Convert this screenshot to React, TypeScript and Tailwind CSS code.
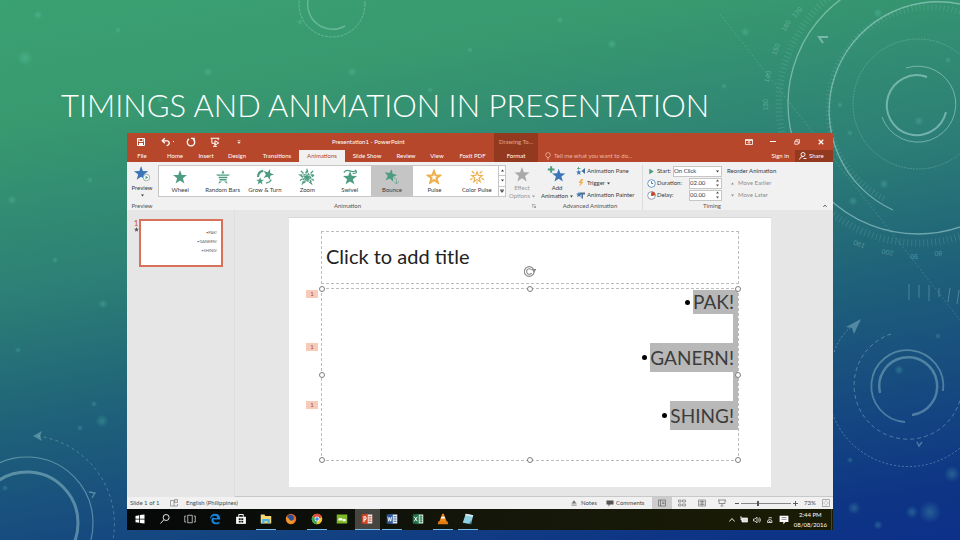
import type { ReactNode } from "react";
import clsx from "clsx";

const STAR = "M8 0 L10 5.6 L16 5.8 L11.3 9.5 L13 15.4 L8 12 L3 15.4 L4.7 9.5 L0 5.8 L6 5.6Z";

const TABS = [
  { name: "File", width: "w-[30px]" },
  { name: "Home", width: "w-9" },
  { name: "Insert", width: "w-[26px]" },
  { name: "Design", width: "w-9" },
  { name: "Transitions", width: "w-11" },
  { name: "Animations", width: "w-[46px]" },
  { name: "Slide Show", width: "w-11" },
  { name: "Review", width: "w-[34px]" },
  { name: "View", width: "w-7" },
  { name: "Foxit PDF", width: "w-[43px]" },
  { name: "Format", width: "w-11" },
];

const GREEN = "#4c9c80";
const ORANGE = "#eeb04e";

const EFFECTS: { name: string; icon: ReactNode }[] = [
  { name: "Wheel", icon: <path d={STAR} fill={GREEN} /> },
  {
    name: "Random Bars",
    icon: (
      <path
        d="M8 0 L9.6 4 H6.4Z M0 5 H16 L14.5 6.6 H1.5Z M3 7.6 H13 V9.4 H3Z M4 10.4 H12 V12 H4Z M3.4 13 H7 L3 15.6Z M12.6 13 H9 L13 15.6Z"
        fill={GREEN}
      />
    ),
  },
  {
    name: "Grow & Turn",
    icon: (
      <g fill={GREEN}>
        <path d={STAR} transform="translate(5 -1) rotate(18 8 8) scale(.78)" />
        <path d={STAR} transform="translate(-2 8) scale(.55)" />
        <path d="M0 8 Q0 2 6 1" fill="none" stroke={GREEN} strokeWidth="2.4" />
        <path d="M15 11 Q14 14 9 15" fill="none" stroke={GREEN} strokeWidth="1.6" />
      </g>
    ),
  },
  {
    name: "Zoom",
    icon: (
      <g>
        <path d={STAR} fill="none" stroke={GREEN} strokeWidth="1.6" strokeDasharray="3 1" />
        <path d={STAR} fill={GREEN} transform="translate(3.2 3.6) scale(.6)" />
        <path d="M1 1 L4 4 M15 1 L12 4 M0 12 L3 10 M16 12 L13 10" stroke={GREEN} strokeWidth="1.6" />
      </g>
    ),
  },
  {
    name: "Swivel",
    icon: (
      <g>
        <path d={STAR} fill={GREEN} transform="translate(0 1)" />
        <path d="M1 3 Q3 -1 8 1 T15 0 M14 0 Q18 4 11 4" fill="none" stroke={GREEN} strokeWidth="1.4" />
      </g>
    ),
  },
  {
    name: "Bounce",
    icon: (
      <g>
        <path d={STAR} fill={GREEN} transform="translate(-1 -1) rotate(12 8 8) scale(.9)" />
        <path d="M10 9 Q14 9 13 15 M11 14 L13 16 L16 13" fill="none" stroke={GREEN} strokeDasharray="2 1" />
      </g>
    ),
  },
  {
    name: "Pulse",
    icon: (
      <g>
        <path d={STAR} fill={ORANGE} stroke={ORANGE} strokeWidth="1.6" strokeLinejoin="round" />
        <path d={STAR} fill="#fff" transform="translate(4.4 4.6) scale(.45)" />
      </g>
    ),
  },
  {
    name: "Color Pulse",
    icon: (
      <g>
        <path d={STAR} fill="none" stroke={ORANGE} transform="translate(2 2) scale(.75)" strokeWidth="1.8" />
        <path d="M2 1 L5 4 M14 1 L11 4 M0 11 L3 9.5 M16 11 L13 9.5 M8 16 V13" stroke={ORANGE} strokeWidth="1.4" />
      </g>
    ),
  },
];

const BULLETS = [
  { text: "PAK!", box: "h-6" },
  { text: "GANERN!", box: "h-[29px]" },
  { text: "SHING!", box: "h-[29px]" },
];

const HANDLES = [
  "left-0 top-0",
  "left-1/2 top-0",
  "left-full top-0",
  "left-0 top-1/2",
  "left-full top-1/2",
  "left-0 top-full",
  "left-1/2 top-full",
  "left-full top-full",
];

const SPECKS = [
  [25, 58, 5], [38, 15, 3], [118, 30, 2], [208, 72, 3], [352, 72, 3], [300, 22, 2], [470, 50, 2], [612, 44, 3],
  [745, 32, 3], [724, 86, 2], [640, 118, 2], [878, 13, 3], [919, 121, 3], [850, 133, 2], [884, 184, 3], [853, 201, 3],
  [103, 304, 3], [80, 428, 2], [102, 421, 4], [94, 404, 2], [18, 350, 2], [55, 260, 2], [899, 370, 3], [854, 508, 4],
  [878, 525, 3], [930, 512, 7], [912, 512, 4], [952, 474, 5], [938, 336, 2], [850, 460, 2], [5, 488, 2], [560, 20, 2],
  [430, 90, 2], [160, 100, 2], [12, 200, 3], [90, 180, 2], [948, 60, 2], [840, 105, 2],
];

const DIAL_NUMBERS = [
  { text: "170", x: 799, y: 14, turn: -48 },
  { text: "160", x: 788, y: 27, turn: -58 },
  { text: "150", x: 778, y: 50, turn: -68 },
  { text: "140", x: 770, y: 77, turn: -78 },
  { text: "130", x: 768, y: 105, turn: -90 },
  { text: "190", x: 860, y: 242, turn: 202 },
  { text: "200", x: 888, y: 250, turn: 190 },
  { text: "90", x: 914, y: 254, turn: 180 },
  { text: "80", x: 938, y: 251, turn: 172 },
];

function Backdrop() {
  return (
    <svg
      className="absolute inset-0 -z-10 h-full w-full"
      viewBox="0 0 960 540"
      preserveAspectRatio="xMidYMid slice"
      aria-hidden="true"
    >
      <defs>
        <radialGradient id="speck">
          <stop offset="0" stopColor="#6fe0c8" stopOpacity=".25" />
          <stop offset="1" stopColor="#6fe0c8" stopOpacity="0" />
        </radialGradient>
      </defs>
      {SPECKS.map(([x, y, r], i) => (
        <circle key={i} cx={x} cy={y} r={r * 1.6} fill="url(#speck)" />
      ))}
      <g fill="none" stroke="#b9e4e4">
        <g strokeOpacity=".5">
          <circle cx="918" cy="104" r="130" strokeWidth="1.3" />
          <path d="M960 4 A109 109 0 0 0 893 210" strokeWidth="1.3" />
          <path d="M927 77 A30 30 0 1 0 946 112" strokeWidth="2" />
          <path d="M906 68 A38 38 0 1 1 882 117" />
        </g>
        <circle cx="918" cy="104" r="65" strokeOpacity=".25" strokeDasharray="2 1" />
        <circle cx="918" cy="104" r="139" strokeOpacity=".15" strokeWidth="7" strokeDasharray="1 3" />
        <path d="M960 12 A101 101 0 0 0 885 199" strokeOpacity=".15" strokeWidth="6" strokeDasharray="1 3" />
        <path d="M720 14 L960 320" strokeOpacity=".2" strokeDasharray="2 2" />
        <path d="M909 284 V300 M919 285 V298 M929 285 V301 M939 288 V297 M950 288 L948 302 M959 290 L957 304" strokeOpacity=".3" />
        <g strokeOpacity=".35">
          <path d="M880 393 A29 29 0 1 1 912 415" strokeWidth="2.5" />
          <path d="M905 422 A36 36 0 1 1 943 391" strokeWidth="1.8" />
          <path d="M891 334 A54 54 0 1 0 960 400" strokeDasharray="4 3" />
          <path d="M830 406 A81 81 0 0 0 960 448 M834 352 Q840 336 850 328" strokeDasharray="2 2" />
          <path d="M917 442 L919 446 L922 442" strokeWidth="1.5" />
        </g>
        <path d="M828 37 H819 L823 43" strokeWidth="2" strokeOpacity=".5" />
        <g strokeOpacity=".4">
          <circle cx="27" cy="523" r="51" strokeWidth="3" />
          <circle cx="27" cy="523" r="66" strokeWidth="1.2" />
          <path d="M38 436 A89 89 0 0 1 113 540" strokeDasharray="3 3" strokeOpacity=".3" />
          <path d="M89 492 L95 493 L92 498" strokeWidth="1.3" />
        </g>
        <g strokeOpacity=".35">
          <circle cx="332" cy="4" r="33" strokeDasharray="3 1" />
          <path d="M308 0 A25 25 0 0 0 345 26" strokeWidth="1.5" />
        </g>
      </g>
      <g fill="#b9e4e4" fillOpacity=".35">
        <path d="M861 319 L846 327 L852 328 L854 334Z" />
        <path d="M33 436 L42 431 L40 436 L42 441Z" />
      </g>
      <g fill="#b9e4e4" fillOpacity=".35" fontFamily="Liberation Sans, sans-serif" fontSize="7" textAnchor="middle">
        {DIAL_NUMBERS.map((n) => (
          <text key={n.text} x={n.x} y={n.y} transform={`rotate(${n.turn} ${n.x} ${n.y})`}>
            {n.text}
          </text>
        ))}
      </g>
    </svg>
  );
}

function Icon({ className, size = 16, children }: { className?: string; size?: number; children: ReactNode }) {
  return (
    <svg className={clsx("shrink-0", className)} viewBox={`0 0 ${size} ${size}`} aria-hidden="true">
      {children}
    </svg>
  );
}

function TitleBar() {
  return (
    <div className="relative flex h-[17px] items-center justify-between">
      <div className="flex items-center">
        <button aria-label="Save" className="flex w-7 justify-center">
          <Icon className="size-2">
            <path d="M1 1 H15 V15 H1Z M4 1 V7 H12 V1" fill="none" stroke="#fff" strokeWidth="2" />
            <path d="M4 10 H12 V15 H4Z" fill="#fff" />
          </Icon>
        </button>
        <button aria-label="Undo" className="flex w-6 items-center justify-center gap-0.5">
          <Icon className="size-2.5">
            <path d="M6 2 L2 6 L6 10 M2 6 H10 Q14 7 13 11 Q12 13 9 14" fill="none" stroke="#fff" strokeWidth="2" />
          </Icon>
          <span className="size-px bg-white" />
        </button>
        <button aria-label="Redo" className="flex w-6 justify-center">
          <Icon className="size-2.5">
            <path d="M5 3 A6 6 0 1 0 11 3 M8 2 H13 M13 1 V7" fill="none" stroke="#fff" strokeWidth="2" />
          </Icon>
        </button>
        <button aria-label="Start from beginning" className="flex w-6 justify-center">
          <Icon className="size-2.5">
            <path d="M1 2 H15 M3 2 V10 H8 M13 2 V5 M8 10 V14 M5 15 H11 M8 6 L14 9.5 L8 13Z" fill="none" stroke="#fff" strokeWidth="1.6" />
          </Icon>
        </button>
        <button aria-label="Customize toolbar" className="flex w-6 justify-center">
          <Icon className="size-1">
            <path d="M2 2 H14 M3 8 L8 14 L13 8Z" fill="#fff" stroke="#fff" strokeWidth="2" />
          </Icon>
        </button>
      </div>
      <span className="absolute left-[205px]">Presentation1 - PowerPoint</span>
      <span className="absolute inset-y-0 left-[367px] flex w-11 items-center justify-center bg-[#93391f] text-[#e0a595]">
        Drawing To...
      </span>
      <div className="flex items-center">
        <button aria-label="Ribbon display options" className="flex w-6 justify-center">
          <Icon className="size-2">
            <path d="M1 3 H15 V13 H1Z M1 5 H15 M8 12 V7 M5 9 L8 7 L11 9" fill="none" stroke="#fff" strokeWidth="1.6" />
          </Icon>
        </button>
        <button aria-label="Minimize" className="flex w-6 justify-center">
          <span className="h-px w-1.5 bg-white" />
        </button>
        <button aria-label="Restore" className="flex w-6 justify-center">
          <Icon className="size-1.5">
            <path d="M2 6 H11 V14 H2Z M5 6 V2 H15 V11 H11" fill="none" stroke="#fff" strokeWidth="2" />
          </Icon>
        </button>
        <button aria-label="Close" className="flex w-6 justify-center">
          <Icon className="size-1.5">
            <path d="M2 2 L14 14 M14 2 L2 14" stroke="#fff" strokeWidth="3" />
          </Icon>
        </button>
      </div>
    </div>
  );
}

function TabRow() {
  return (
    <nav className="flex h-3 items-stretch">
      {TABS.map((tab) => (
        <button
          key={tab.name}
          className={clsx(
            "shrink-0 text-center",
            tab.width,
            tab.name === "Animations" && "bg-[#f1f1f1] text-[#b7472a]",
            tab.name === "Format" && "bg-[#93391f]",
          )}
        >
          {tab.name}
        </button>
      ))}
      <button className="ml-1.5 flex items-center gap-0.5 text-[#eab5a6]">
        <Icon className="size-2">
          <path d="M6 11 Q2 7 4 3 Q8 -1 12 3 Q14 7 10 11Z M6 14 H10" fill="none" stroke="currentColor" strokeWidth="1.6" />
        </Icon>
        Tell me what you want to do...
      </button>
      <button className="mr-1.5 ml-auto">Sign in</button>
      <button className="flex w-[38px] items-center gap-0.5 bg-[#93391f] pl-1">
        <Icon className="size-2">
          <path d="M8 1 A4 4 0 1 1 8 9 A4 4 0 1 1 8 1 M1 15 Q2 9 8 9 M9 13 H15" fill="none" stroke="#fff" strokeWidth="1.8" />
        </Icon>
        Share
      </button>
    </nav>
  );
}

function Caret({ up, className }: { up?: boolean; className?: string }) {
  return (
    <Icon className={clsx("size-[3px]", className)}>
      <path d={up ? "M0 13 L8 3 L16 13Z" : "M0 3 L8 13 L16 3Z"} fill="currentColor" />
    </Icon>
  );
}

function Group({ label, className, children }: { label: string; className?: string; children: ReactNode }) {
  return (
    <section className={clsx("flex flex-col", className)}>
      <div className="flex h-10 items-start">{children}</div>
      <h2 className="text-center leading-2 text-[#555]">{label}</h2>
    </section>
  );
}

function TimeField({ id, label, value, red }: { id: string; label: string; value: string; red?: boolean }) {
  return (
    <div className="flex h-3 items-center">
      <Icon className="mr-px size-[9px]">
        <circle cx="8" cy="8" r="6.8" fill="#fff" stroke={red ? "#8a93a5" : "#5a8fc4"} strokeWidth="1.6" />
        {red && <path d="M8 8 V1 A7 7 0 0 1 15 8Z" fill="#c9482c" />}
        <path d="M8 4 V8 H11" fill="none" stroke="#555" strokeWidth="1.4" />
      </Icon>
      <label htmlFor={id}>{label}</label>
      <div className="ml-auto flex h-[11px] w-[33px] items-center border border-[#c6c6c6] bg-white pr-0.5">
        <input id={id} defaultValue={value} className="w-full min-w-0 bg-transparent outline-none" />
        <span className="flex flex-col gap-0.5 text-[#555]">
          <Caret up />
          <Caret />
        </span>
      </div>
    </div>
  );
}

function Ribbon() {
  return (
    <div className="flex h-12 bg-[#f1f1f1] pt-[3px] text-[#3b3b3b]">
      <Group label="Preview" className="w-[30px]">
        <button className="flex w-full flex-col items-center pt-px leading-2">
          <Icon className="mb-0.5 h-4 w-5" size={18}>
            <path d={STAR} fill="#3d76b8" />
            <circle cx="14" cy="13" r="3.6" fill="#fff" stroke="#8aa7a0" />
            <path d="M13 11 L16 13 L13 15Z" fill="#4c9c80" />
          </Icon>
          Preview
          <Caret className="mt-0.5" />
        </button>
      </Group>

      <Group label="Animation" className="relative w-[381px]">
        <div className="ml-px flex h-8 w-[348px] border border-[#c6c6c6] bg-white">
          {EFFECTS.map((effect) => (
            <button
              key={effect.name}
              className={clsx(
                "flex flex-1 flex-col items-center gap-0.5 pt-1 leading-2 whitespace-nowrap",
                effect.name === "Bounce" && "bg-[#c5c5c5]",
              )}
            >
              <Icon className="h-[14px] w-4 overflow-visible">{effect.icon}</Icon>
              {effect.name}
            </button>
          ))}
          <div className="flex w-[7px] flex-col divide-y divide-[#c6c6c6] border-l border-[#c6c6c6]">
            <button aria-label="Scroll up" className="flex flex-1 items-center justify-center">
              <Caret up />
            </button>
            <button aria-label="Scroll down" className="flex flex-1 items-center justify-center">
              <Caret />
            </button>
            <button aria-label="More effects" className="flex flex-1 items-center justify-center">
              <Icon className="size-1">
                <path d="M1 2 H15 M1 6 L8 14 L15 6Z" fill="#444" stroke="#444" strokeWidth="2" />
              </Icon>
            </button>
          </div>
        </div>
        <button className="flex w-8 flex-col items-center pt-0.5 leading-2 text-[#9a9a9a]">
          <Icon className="mb-0.5 h-[15px] w-4">
            <path d={STAR} fill="#a9a9a9" />
          </Icon>
          Effect
          <span className="flex items-center gap-0.5">
            Options <Caret />
          </span>
        </button>
        <button aria-label="Animation dialog" className="absolute right-0.5 bottom-0.5">
          <Icon className="size-1">
            <path d="M1 14 V1 H14 M6 6 L14 14 M14 7 V14 H7" fill="none" stroke="#666" strokeWidth="2" />
          </Icon>
        </button>
      </Group>

      <Group label="Advanced Animation" className="w-[105px] border-r border-[#dcdcdc]">
        <button className="flex w-[38px] shrink-0 flex-col items-center pt-0.5 leading-2">
          <Icon className="mb-0.5 h-[15px] w-5 overflow-visible" size={18}>
            <path d={STAR} fill="#3d76b8" transform="translate(3 2)" />
            <path d="M2 -1 V7 M-2 3 H6" stroke="#4c9c80" strokeWidth="2.4" />
          </Icon>
          Add
          <span className="flex items-center gap-0.5">
            Animation <Caret />
          </span>
        </button>
        <div className="flex flex-col whitespace-nowrap">
          <button className="flex h-3 items-center gap-px">
            <Icon className="h-2 w-2.5">
              <path d={STAR} fill="#3d76b8" transform="translate(-2 5) scale(.7)" />
              <path d="M3 0 V5 M0 3 H7" stroke="#4c9c80" strokeWidth="1.6" />
              <path d="M16 2 V14 L9 8Z" fill="#3d6fa0" />
            </Icon>
            Animation Pane
          </button>
          <button className="flex h-3 items-center gap-px">
            <Icon className="h-2 w-2.5">
              <path d="M8 0 H13 L9 6 H13 L4 16 L7 8 H3Z" fill="#f0b255" />
            </Icon>
            Trigger <Caret className="ml-px" />
          </button>
          <button className="flex h-3 items-center gap-px">
            <Icon className="h-2 w-2.5">
              <path d={STAR} fill="#3d76b8" transform="translate(-2 1) scale(.75)" />
              <path d="M6 3 H16 V7 H12 V15 H9 V7 H6Z" fill="#50708f" />
            </Icon>
            Animation Painter
          </button>
        </div>
      </Group>

      <Group label="Timing" className="w-[138px]">
        <div className="w-[79px] pl-1">
          <div className="flex h-3 items-center">
            <Icon className="mr-px size-[9px]">
              <path d="M4 3 L12 8 L4 13Z" fill="#4c9c80" />
            </Icon>
            <label htmlFor="start">Start:</label>
            <span className="relative ml-auto flex h-[11px] w-[49px] items-center border border-[#c6c6c6] bg-white">
              <select id="start" className="w-full appearance-none bg-transparent outline-none">
                <option>On Click</option>
                <option>With Previous</option>
                <option>After Previous</option>
              </select>
              <Caret className="absolute right-0.5" />
            </span>
          </div>
          <TimeField id="duration" label="Duration:" value="02.00" />
          <TimeField id="delay" label="Delay:" value="00.00" red />
        </div>
        <div className="pl-[5px] whitespace-nowrap">
          <h3 className="h-3 leading-3">Reorder Animation</h3>
          <button className="flex h-3 items-center gap-1 pl-1 text-[#8d8d8d]">
            <Caret up /> Move Earlier
          </button>
          <button className="flex h-3 items-center gap-1 pl-1 text-[#8d8d8d]">
            <Caret /> Move Later
          </button>
        </div>
      </Group>
      <button aria-label="Collapse the ribbon" className="mt-auto mr-1.5 mb-0.5 ml-auto">
        <Icon className="size-1">
          <path d="M1 12 L8 4 L15 12" fill="none" stroke="#444" strokeWidth="3" />
        </Icon>
      </button>
    </div>
  );
}

function Slide() {
  return (
    <div className="relative w-[482px] border-t border-[#d8d8d8] bg-white px-8 pt-[13px] pb-[26px] font-['Lato',sans-serif]">
      <h2 className="flex h-[53px] items-center border border-dashed border-[#bdbdbd] pb-1 pl-1 text-[20px] leading-6 text-[#222]">
        Click to add title
      </h2>
      <div className="relative mt-1 h-[173px] border border-dashed border-[#bdbdbd] pt-px">
        <ul>
          {BULLETS.map((bullet, i) => (
            <li key={bullet.text} className="relative flex flex-col items-end">
              {i > 0 && <span className="h-[29px] w-[5px] bg-[#b8b8b8]" />}
              <div className="relative flex w-full items-center justify-end">
                <span className="absolute top-0 -left-4 flex h-2 w-3 items-center justify-center bg-[#f8cbb9] text-[6px] leading-2 text-[#a04a30]">
                  1
                </span>
                <span className="mr-[3px] size-[5px] rounded-full bg-black" />
                <span className={clsx("flex items-center bg-[#b8b8b8] pr-1 text-[19px] leading-6 text-[#3c3c3c]", bullet.box)}>
                  {bullet.text}
                </span>
              </div>
            </li>
          ))}
        </ul>
        {HANDLES.map((place) => (
          <span
            key={place}
            className={clsx("absolute size-1.5 -translate-1/2 rounded-full border border-[#7d7d7d] bg-white", place)}
          />
        ))}
        <Icon className="absolute -top-6 left-1/2 size-[13px] -translate-x-1/2">
          <circle cx="7" cy="8" r="6" fill="#fff" stroke="#8a8a8a" strokeWidth="1.4" />
          <path d="M10 6 A3.4 3.4 0 1 0 10 10" fill="none" stroke="#8a8a8a" strokeWidth="1.4" />
          <path d="M10 5 H16 L13 9.5Z" fill="#8a8a8a" />
        </Icon>
      </div>
    </div>
  );
}

function Workspace() {
  return (
    <div className="flex flex-1 bg-[#e6e6e6]">
      <aside className="flex w-[108px] items-start border-r border-[#dedede] pt-[9px] pl-1.5">
        <div className="flex w-1.5 flex-col items-center text-[#c9482c]">
          <span className="text-[8px] leading-2">1</span>
          <Icon className="size-[5px]">
            <path d={STAR} fill="#555" />
          </Icon>
        </div>
        <button
          aria-label="Slide 1"
          className="flex h-12 w-[84px] flex-col items-end gap-[5px] border-2 border-[#d9705a] bg-white pt-2.5 pr-1 text-[4px] leading-1 text-[#666]"
        >
          {BULLETS.map((bullet) => (
            <span key={bullet.text}>•{bullet.text}</span>
          ))}
        </button>
      </aside>
      <main className="flex flex-1 items-start justify-center border-b border-[#c8c8c8] pt-[7px] pr-2">
        <Slide />
      </main>
    </div>
  );
}

function StatusBar() {
  return (
    <footer className="flex h-3 items-center bg-[#f1f1f1] text-[#4a4a4a]">
      <span className="ml-[3px] w-10">Slide 1 of 1</span>
      <Icon className="mr-2 size-2">
        <path d="M8 3 H1 V14 H15 V10 M8 3 V14 M9 1 H15 V7 H9Z M11 4 H13" fill="none" stroke="#777" strokeWidth="1.3" />
      </Icon>
      English (Philippines)
      <button className="ml-auto flex w-[35px] items-center gap-1">
        <Icon className="size-1.5">
          <path d="M8 2 L12 7 H4Z M1 10 H15 M1 14 H15" fill="#666" stroke="#666" strokeWidth="1.6" />
        </Icon>
        Notes
      </button>
      <button className="flex w-[46px] items-center gap-0.5">
        <Icon className="size-2">
          <path d="M1 3 H15 V11 H8 L5 15 V11 H1Z" fill="#555" />
        </Icon>
        Comments
      </button>
      <button aria-label="Normal view" className="flex h-3 w-5 items-center justify-center bg-[#cdcdcd]">
        <Icon className="size-2">
          <path d="M1 2 H15 V14 H1Z M5 2 V14 M8 6 H13 M8 9 H13" fill="none" stroke="#666" strokeWidth="1.4" />
        </Icon>
      </button>
      <button aria-label="Slide sorter" className="flex w-5 justify-center">
        <Icon className="size-2">
          <path d="M1 2 H6 V6 H1Z M9 2 H15 V6 H9Z M1 10 H6 V14 H1Z M9 10 H15 V14 H9Z" fill="none" stroke="#777" strokeWidth="1.4" />
        </Icon>
      </button>
      <button aria-label="Reading view" className="flex w-5 justify-center">
        <Icon className="size-2">
          <path d="M1 2 H15 V14 H1Z M8 2 V14 M3 5 H13 M3 8 H13 M3 11 H13" fill="none" stroke="#777" strokeWidth="1.4" />
        </Icon>
      </button>
      <button aria-label="Slide show" className="flex w-5 justify-center">
        <Icon className="size-2">
          <path d="M0 2 H16 M2 2 V9 H14 V2 M8 9 V13 M5 14 H11" fill="none" stroke="#777" strokeWidth="1.6" />
        </Icon>
      </button>
      <button aria-label="Zoom out" className="ml-0.5 flex w-1.5 justify-center">
        <span className="h-px w-1 bg-[#555]" />
      </button>
      <input
        type="range"
        aria-label="Zoom"
        defaultValue={33}
        className="mx-px h-1.5 w-[50px] appearance-none bg-transparent [&::-webkit-slider-runnable-track]:h-px [&::-webkit-slider-runnable-track]:bg-[#888] [&::-webkit-slider-thumb]:-mt-0.5 [&::-webkit-slider-thumb]:h-[5px] [&::-webkit-slider-thumb]:w-0.5 [&::-webkit-slider-thumb]:appearance-none [&::-webkit-slider-thumb]:bg-[#555]"
      />
      <button aria-label="Zoom in" className="flex w-1.5 justify-center">
        <Icon className="size-[5px]">
          <path d="M8 0 V16 M0 8 H16" stroke="#555" strokeWidth="3" />
        </Icon>
      </button>
      <span className="ml-0.5 w-5 text-center">73%</span>
      <button aria-label="Fit slide" className="mr-[3px] ml-0.5">
        <Icon className="size-2">
          <path d="M1 1 H15 V15 H1Z M8 3 V6 M8 10 V13 M3 8 H6 M10 8 H13" fill="none" stroke="#888" strokeWidth="1.3" />
        </Icon>
      </button>
    </footer>
  );
}

const APPS: { name: string; open?: boolean; active?: boolean; icon: ReactNode }[] = [
  {
    name: "Start",
    icon: <path d="M2 4 L7 3 V7.6 H2Z M8 2.8 L14 2 V7.6 H8Z M2 8.5 H7 V13 L2 12.2Z M8 8.5 H14 V14 L8 13.2Z" fill="#fff" />,
  },
  {
    name: "Search",
    icon: (
      <g fill="none" stroke="#fff" strokeWidth="1.2">
        <circle cx="9.5" cy="6" r="4" />
        <path d="M6.5 9 L2 14" />
      </g>
    ),
  },
  {
    name: "Task view",
    icon: <path d="M5 3 H11 V13 H5Z M3 4 H1 V12 H3 M13 4 H15 V12 H13" fill="none" stroke="#ddd" />,
  },
  {
    name: "Edge",
    icon: <path d="M1 8 Q2 1 8.5 1 Q15 1 15 8.6 H6 Q6 12.4 10 12.5 Q12.5 12.4 14 11.3 V14 Q11 15.5 8 15 Q3 14 3.2 9 Q3.6 6 6.5 4.5 Q5.6 5.6 5.6 6.6 H11 Q11 3.8 8 3.8 Q4 3.8 1 8Z" fill="#1583dc" />,
  },
  {
    name: "Store",
    icon: (
      <g>
        <path d="M1.5 5 H14.5 V14.5 H1.5Z" fill="#fff" />
        <path d="M5 5 V2 H11 V5" fill="none" stroke="#fff" strokeWidth="1.3" />
        <path d="M5 7 H7.6 V9.4 H5Z M8.4 7 H11 V9.4 H8.4Z M5 10.2 H7.6 V12.6 H5Z M8.4 10.2 H11 V12.6 H8.4Z" fill="#111" />
      </g>
    ),
  },
  {
    name: "File Explorer",
    open: true,
    icon: (
      <g>
        <path d="M1 2 H6 L7 4 H15 V14 H1Z" fill="#f7d774" />
        <path d="M3 8 H13 V14 H10 V11 H6 V14 H3Z" fill="#4bb4e6" />
      </g>
    ),
  },
  {
    name: "Firefox",
    icon: (
      <g>
        <circle cx="8" cy="8" r="7" fill="#e66a1f" />
        <circle cx="7.4" cy="6.6" r="4.4" fill="#2d4f9a" />
        <path d="M1.5 5 Q5 6 6 9 Q9 12 13 8 Q12 14 7.5 14.6 Q1 13 1.5 5Z" fill="#f29a2c" />
      </g>
    ),
  },
  {
    name: "Chrome",
    open: true,
    icon: (
      <g>
        <circle cx="8" cy="8" r="7" fill="#f5c92c" />
        <path d="M8 8 L1.9 4.5 A7 7 0 0 1 14.6 5.6Z" fill="#dd4b3e" />
        <path d="M8 8 L1.9 4.5 A7 7 0 0 0 7.6 15Z" fill="#3fa557" />
        <circle cx="8" cy="8" r="3.2" fill="#fff" />
        <circle cx="8" cy="8" r="2.4" fill="#4285f4" />
      </g>
    ),
  },
  {
    name: "Camtasia",
    icon: (
      <g>
        <path d="M1 2 H15 V14 H1Z" fill="#7fb927" />
        <path d="M3 10 Q3 6 6 7 Q9 6 9 10Z M9 11 Q9 7 11 8 Q14 8 13 11Z" fill="#fff" />
      </g>
    ),
  },
  {
    name: "PowerPoint",
    open: true,
    active: true,
    icon: (
      <g>
        <path d="M8 2 H15 V14 H8Z" fill="#f6e9e5" />
        <path d="M10 5 H14 M10 8 H14 M10 11 H14" stroke="#d04727" strokeWidth="1.4" />
        <path d="M1 2 L9 1 V15 L1 14Z" fill="#d04727" />
        <path d="M4 12 V5 H6 Q8 7 6 9 H4" fill="none" stroke="#fff" strokeWidth="1.4" />
      </g>
    ),
  },
  {
    name: "Word",
    open: true,
    icon: (
      <g>
        <path d="M8 2 H15 V14 H8Z" fill="#e8eef8" />
        <path d="M10 5 H14 M10 8 H14 M10 11 H14" stroke="#2b579a" strokeWidth="1.2" />
        <path d="M1 2 L9 1 V15 L1 14Z" fill="#2b579a" />
        <path d="M2.4 5 L3.7 11 L5 6 L6.3 11 L7.6 5" fill="none" stroke="#fff" strokeWidth="1.1" />
      </g>
    ),
  },
  {
    name: "Excel",
    icon: (
      <g>
        <path d="M8 2 H15 V14 H8Z" fill="#dcefe4" />
        <path d="M10 5 H14 M10 8 H14 M10 11 H14 M12 3 V13" stroke="#217346" strokeWidth="1.2" />
        <path d="M1 2 L9 1 V15 L1 14Z" fill="#217346" />
        <path d="M3 5 L7 11 M7 5 L3 11" stroke="#fff" strokeWidth="1.3" />
      </g>
    ),
  },
  {
    name: "VLC",
    open: true,
    icon: (
      <g>
        <path d="M7 1 H9 L13 12 H3Z" fill="#f08a1d" />
        <path d="M5.7 5 H10.3 L11 7.4 H5Z" fill="#fff" />
        <path d="M2 11 H14 L15 15 H1Z" fill="#e57a12" />
      </g>
    ),
  },
  {
    name: "Notepad",
    open: true,
    icon: (
      <g>
        <path d="M5 1 L15 3 L12 15 L1 13Z" fill="#8fd0e0" />
        <path d="M5 1 L15 3 L14.4 5 L4.4 3Z" fill="#dfeff2" />
        <path d="M9 14.4 L13.4 9 L12 15Z" fill="#3f7f92" />
      </g>
    ),
  },
];

function Taskbar() {
  return (
    <div className="flex h-[21px] items-stretch bg-linear-to-r from-[#050807] via-[#14160a] to-[#1b1c04] text-white">
      <div className="flex w-[354px] items-stretch">
        {APPS.map((app) => (
          <button
            key={app.name}
            aria-label={app.name}
            className={clsx("flex flex-1 flex-col items-center justify-between pt-1", app.active && "bg-[#47453f]")}
          >
            <Icon className="size-3">{app.icon}</Icon>
            {app.open && <span className={clsx("h-px bg-[#76b9ed]", app.active ? "w-full" : "w-5")} />}
          </button>
        ))}
      </div>
      <div className="mr-px ml-auto flex items-center gap-[5px] border-r border-[#444] pr-1">
        <Icon className="size-1.5">
          <path d="M1 12 L8 4 L15 12" fill="none" stroke="#fff" strokeWidth="2.4" />
        </Icon>
        <Icon className="size-2">
          <path d="M4 4 H15 V12 H4Z M0 2 H4 M2 2 V8 H4" fill="#ddd" stroke="#fff" strokeWidth="1.4" />
        </Icon>
        <Icon className="size-2">
          <path d="M1 6 H4 L8 2 V14 L4 10 H1Z M11 5 Q13 8 11 11 M13 3 Q17 8 13 13" fill="none" stroke="#fff" strokeWidth="1.4" />
        </Icon>
        <Icon className="size-2">
          <path d="M3 13 Q2 7 8 7 Q13 8 12 13 H3 M5 4 Q8 2 12 4 M6 10 L10 13" fill="none" stroke="#ddd" strokeWidth="1.8" />
        </Icon>
        <Icon className="size-2.5">
          <path d="M1 1 H15 V11 H10 L7 15 V11 H1Z" fill="#fff" />
          <path d="M4 4 H12 M4 7 H12" stroke="#555" />
        </Icon>
        <div className="text-center leading-2.5">
          <p>2:44 PM</p>
          <p>08/08/2016</p>
        </div>
      </div>
    </div>
  );
}

export default function App() {
  return (
    <div className="relative isolate flex min-h-screen flex-col bg-[linear-gradient(170deg,#3aa172_0%,#38996f_18%,#2c7f76_42%,#1f6279_60%,#174c7f_76%,#0e3585_92%,#0c3089_100%)] pb-2.5">
      <Backdrop />
      <h1 className="mt-[85px] mb-2 ml-[61px] font-['Lato',sans-serif] text-[31px] leading-10 font-light text-white uppercase">
        Timings and Animation in Presentation
      </h1>
      <div className="mx-[127px] flex flex-1 flex-col font-['Lato',sans-serif] text-[6px] leading-3">
        <header className="bg-[#b7472a] text-white">
          <TitleBar />
          <TabRow />
        </header>
        <Ribbon />
        <Workspace />
        <StatusBar />
        <Taskbar />
      </div>
    </div>
  );
}
